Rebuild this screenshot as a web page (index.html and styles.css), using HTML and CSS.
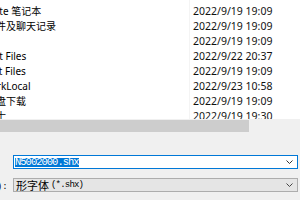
FILE: index.html
```html
<!DOCTYPE html>
<html lang="zh-CN">
<head>
<meta charset="utf-8">
<title>打开字体文件</title>
<link rel="stylesheet" href="styles.css">
</head>
<body>
<div class="list">
  <div class="rows">
    <div class="row"><span class="name">Music</span><span class="date">2022/9/19 19:09</span></div>
    <div class="row"><span class="name">OneNote 笔记本</span><span class="date">2022/9/19 19:09</span></div>
    <div class="row"><span class="name">我的文件及聊天记录</span><span class="date">2022/9/19 19:09</span></div>
    <div class="row"><span class="name"></span><span class="date">2022/9/19 19:09</span></div>
    <div class="row"><span class="name">Tencent Files</span><span class="date">2022/9/22 20:37</span></div>
    <div class="row"><span class="name">WeChat Files</span><span class="date">2022/9/19 19:09</span></div>
    <div class="row"><span class="name">NetworkLocal</span><span class="date">2022/9/23 10:58</span></div>
    <div class="row"><span class="name">百度网盘下载</span><span class="date">2022/9/19 19:09</span></div>
    <div class="row"><span class="name">研究博士</span><span class="date">2022/9/19 19:30</span></div>
  </div>
</div>
<div class="hscroll"><div class="thumb"></div></div>
<div class="form">
  <div class="field">
    <label class="label">文件名(N):</label>
    <div class="combo focused">
      <span class="sel">N5002000.shx</span>
      <svg class="chev" width="7" height="4" viewBox="0 0 7 4"><path d="M0.5 0.5 L3.5 3.5 L6.5 0.5" fill="none" stroke="#333" stroke-width="1"/></svg>
    </div>
  </div>
  <div class="field">
    <label class="label">文件类型(T):</label>
    <div class="combo readonly">
      <span class="cjk">形字体</span><span class="ext">(*.shx)</span>
      <svg class="chev" width="7" height="4" viewBox="0 0 7 4"><path d="M0.5 0.5 L3.5 3.5 L6.5 0.5" fill="none" stroke="#444" stroke-width="1"/></svg>
    </div>
  </div>
</div>
</body>
</html>
```

FILE: styles.css
```css
body {
  margin: 0;
  width: 300px;
  height: 200px;
  overflow: hidden;
  background: #f0f0f0;
  font-family: "Noto Sans", "Noto Sans CJK SC", sans-serif;
  color: #000;
}

.list {
  height: 119px;
  background: #fff;
  overflow: hidden;
}

.rows {
  margin-top: -11px;
  margin-left: -34px;
}

.row {
  display: grid;
  grid-template-columns: 223px auto;
  height: 15px;
  line-height: 15px;
  white-space: nowrap;
}

.name {
  font-size: 10px;
  overflow: hidden;
}

.date {
  font-size: 10.5px;
  padding-left: 3px;
  border-left: 1px solid #f4f4f4;
  color: #111;
}

.hscroll {
  height: 13px;
  padding-top: 1px;
  box-sizing: border-box;
}

.thumb {
  width: 249px;
  height: 12px;
  background: #cdcdcd;
}

.form {
  margin-top: 23px;
  margin-left: -50px;
  display: flex;
  flex-direction: column;
  gap: 9px;
}

.field {
  display: grid;
  grid-template-columns: 63px 285px;
  align-items: center;
}

.label {
  font-family: "Liberation Mono", "Noto Sans CJK SC", monospace;
  font-size: 9px;
  white-space: nowrap;
}

.combo {
  height: 14px;
  box-sizing: border-box;
  border: 1px solid #7a7a7a;
  display: flex;
  align-items: center;
  padding-left: 1px;
  font-family: "Liberation Mono", "Noto Sans CJK SC", monospace;
  font-size: 10px;
  white-space: nowrap;
}

.combo.focused {
  border-color: #0078d7;
  background: #fff;
}

.combo.readonly {
  background: #e5e5e5;
  border-color: #adadad;
  padding-left: 2px;
}

.sel {
  background: #0078d7;
  color: #fff;
  font-size: 10.5px;
  line-height: 9px;
  height: 9px;
  flex: none;
  letter-spacing: -1px;
}

.cjk {
  font-family: "Noto Sans CJK SC", sans-serif;
  font-size: 11px;
  line-height: 12px;
}

.ext {
  margin-left: 2px;
  font-size: 9px;
  letter-spacing: -0.8px;
}

.chev {
  margin-left: auto;
  margin-right: 4px;
  display: block;
}
```
